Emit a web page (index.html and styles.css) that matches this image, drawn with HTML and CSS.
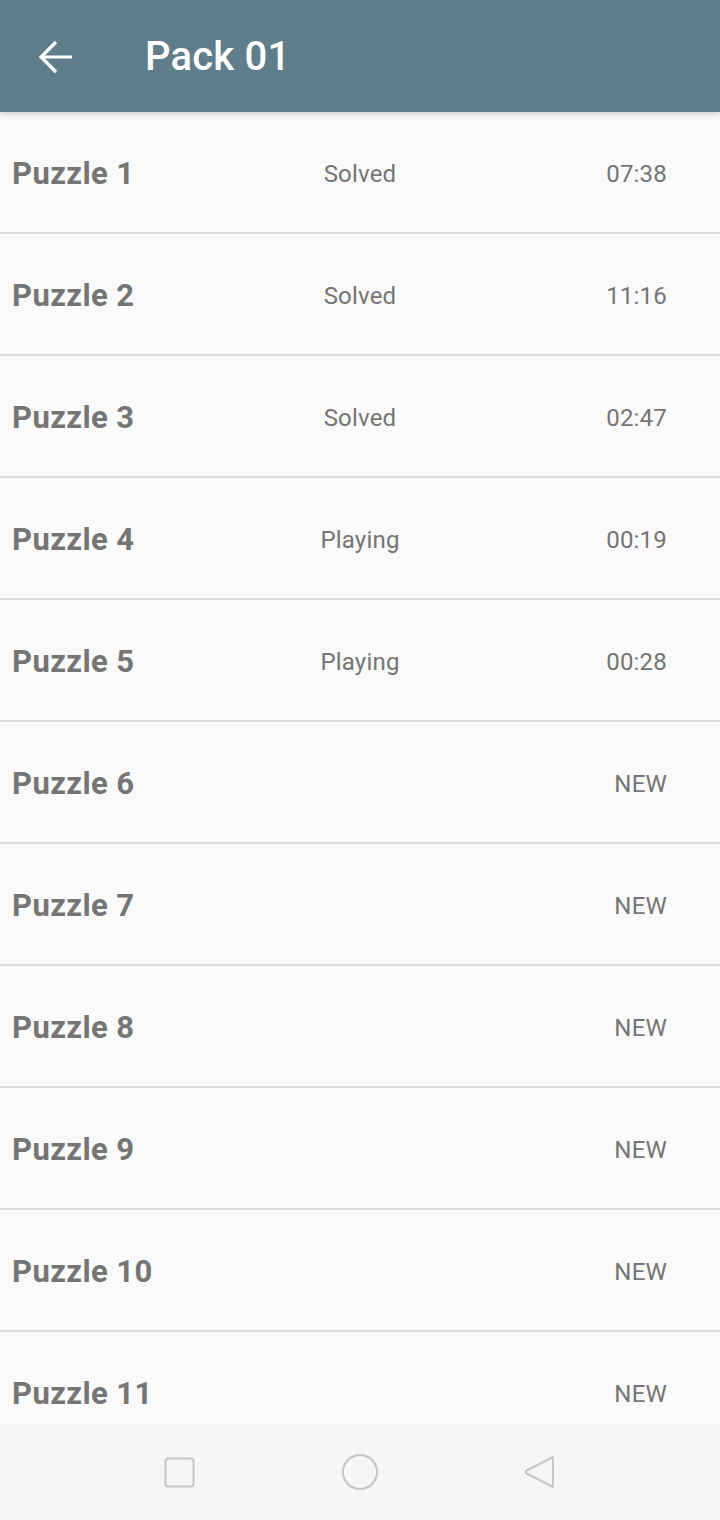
FILE: index.html
```html
<!DOCTYPE html>
<html>
<head>
<meta charset="utf-8">
<link rel="stylesheet" href="styles.css">
</head>
<body>
<div class="screen">
  <header class="appbar">
    <svg class="back" width="36" height="36" viewBox="0 0 36 36"><path d="M2.5 18H34M18 3L3 18l15 15" fill="none" stroke="#fff" stroke-width="3.2"/></svg>
    <h1 class="title">Pack 01</h1>
  </header>
  <main class="list">
    <div class="row"><span class="name">Puzzle 1</span><span class="status">Solved</span><span class="time">07:38</span></div>
    <div class="row"><span class="name">Puzzle 2</span><span class="status">Solved</span><span class="time">11:16</span></div>
    <div class="row"><span class="name">Puzzle 3</span><span class="status">Solved</span><span class="time">02:47</span></div>
    <div class="row"><span class="name">Puzzle 4</span><span class="status">Playing</span><span class="time">00:19</span></div>
    <div class="row"><span class="name">Puzzle 5</span><span class="status">Playing</span><span class="time">00:28</span></div>
    <div class="row"><span class="name">Puzzle 6</span><span class="status"></span><span class="time">NEW</span></div>
    <div class="row"><span class="name">Puzzle 7</span><span class="status"></span><span class="time">NEW</span></div>
    <div class="row"><span class="name">Puzzle 8</span><span class="status"></span><span class="time">NEW</span></div>
    <div class="row"><span class="name">Puzzle 9</span><span class="status"></span><span class="time">NEW</span></div>
    <div class="row"><span class="name">Puzzle 10</span><span class="status"></span><span class="time">NEW</span></div>
    <div class="row"><span class="name">Puzzle 11</span><span class="status"></span><span class="time">NEW</span></div>
  </main>
  <nav class="navbar">
    <svg class="nav-recent" width="31" height="31" viewBox="0 0 31 31"><rect x="1.5" y="1.5" width="28" height="28" rx="3" fill="none" stroke="#c6c6c6" stroke-width="2"/></svg>
    <svg class="nav-home" width="38" height="38" viewBox="0 0 38 38"><circle cx="19" cy="19" r="17" fill="none" stroke="#c6c6c6" stroke-width="2"/></svg>
    <svg class="nav-back" width="34" height="36" viewBox="0 0 34 36"><path d="M30 3.5 Q31 2.5 31 4.5 V31.5 Q31 33.5 30 32.5 L4.5 19.5 Q3 18 4.5 16.5 Z" fill="none" stroke="#c6c6c6" stroke-width="2" stroke-linejoin="round"/></svg>
  </nav>
</div>
</body>
</html>
```

FILE: styles.css
```css
* { box-sizing: border-box; }
html, body { margin: 0; padding: 0; }
body {
  width: 720px;
  height: 1520px;
  overflow: hidden;
  background: #fafafa;
  font-family: Roboto, "Liberation Sans", sans-serif;
}
.screen {
  width: 720px;
  height: 1520px;
  display: flex;
  flex-direction: column;
}
.appbar {
  height: 112px;
  flex: 0 0 112px;
  background: #607d8b;
  display: flex;
  align-items: center;
  padding-left: 38px;
  box-shadow: 0 2px 6px rgba(0,0,0,0.18);
  position: relative;
  z-index: 2;
}
.back { display: block; margin-top: 2px; }
.title {
  margin: 0 0 0 71px;
  color: #fff;
  font-weight: 500;
  font-size: 40px;
  letter-spacing: 0.2px;
}
.list {
  flex: 1;
  overflow: hidden;
}
.row {
  height: 122px;
  display: grid;
  grid-template-columns: 240px 240px 240px;
  align-items: center;
  border-bottom: 2px solid #dcdcdc;
  color: #757575;
}
.name {
  padding-left: 12px;
  padding-top: 2px;
  font-weight: 700;
  font-size: 31px;
  letter-spacing: 0.4px;
  color: #757575;
}
.status {
  text-align: center;
  font-size: 24px;
  letter-spacing: 0.2px;
  padding-top: 3px;
}
.time {
  text-align: right;
  padding-right: 53px;
  font-size: 24px;
  letter-spacing: 0.2px;
  padding-top: 3px;
}
.navbar {
  flex: 0 0 96px;
  height: 96px;
  background: #f6f6f6;
  display: flex;
  align-items: center;
  justify-content: center;
}
.navbar svg { display: block; }
.nav-recent { margin-right: 146px; }
.nav-home { margin-right: 143px; }
```
